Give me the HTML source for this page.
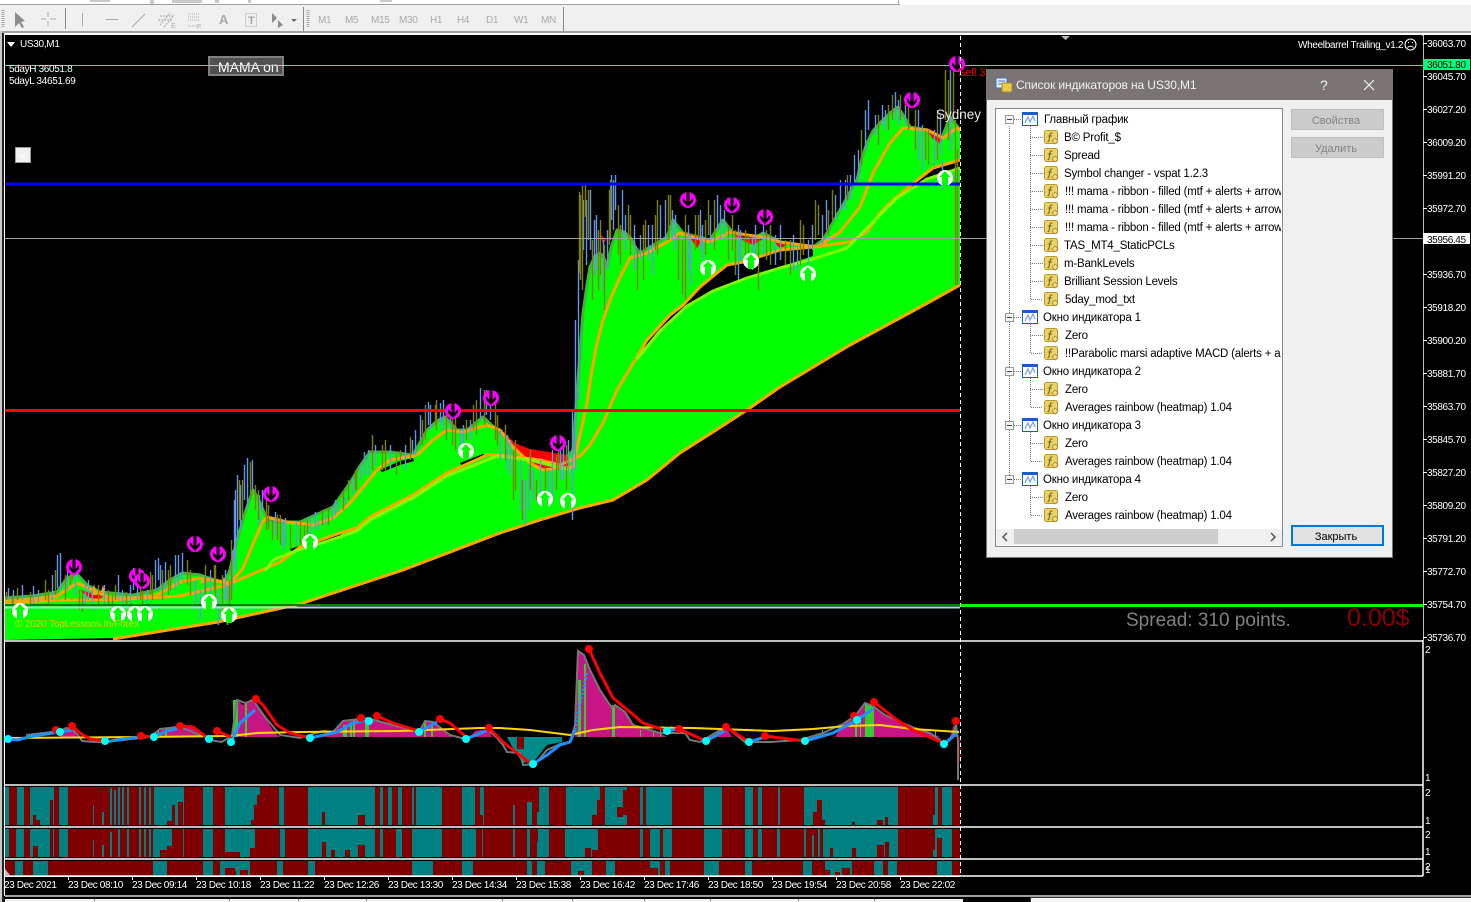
<!DOCTYPE html>
<html><head><meta charset="utf-8"><title>US30,M1</title>
<style>
html,body{margin:0;padding:0;background:#000;width:1471px;height:902px;overflow:hidden}
svg{display:block;font-family:"Liberation Sans","Noto Sans CJK SC",sans-serif}
.ax text{font-size:10px;fill:#fff;letter-spacing:-.38px}
.tb text{font-size:10px;fill:#a8a8a8;letter-spacing:-.3px}
.tr text{font-size:11.5px;fill:#000;letter-spacing:-.2px}
</style></head><body>
<svg width="1471" height="902" viewBox="0 0 1471 902" xmlns="http://www.w3.org/2000/svg">
<defs>
<g id="s"><circle r="8" fill="#f0f"/><path d="M-1.500-8H1.500V2L5-2V1.500L0 7-5 1.500V-2L-1.500 2Z" fill="#000"/></g>
<g id="b"><circle r="8" fill="#fff"/><path d="M0-7-5.500-1H-3V8H3V-1H5.500Z" fill="#0f0"/></g>
<g id="fi"><rect x=".5" y=".5" width="13" height="13" rx="2" fill="#ecd26a" stroke="#b8982c"/><path d="M8.500 3Q6 2.500 6 5L5 10.500Q4.800 12 3.500 11.500M3.800 6H8" fill="none" stroke="#7a6420" stroke-width="1.100"/><path d="M11 8l3 3-3 3-3-3z" fill="#f5dc80" stroke="#a88a28" stroke-width=".8"/></g>
<g id="fo"><rect x=".5" y=".5" width="15" height="13" fill="#fff" stroke="#1a5cc8"/><rect x="0" y="0" width="16" height="3" fill="#1a5cc8"/><path d="M3 11 6 5 8 10 11 4 13 9" fill="none" stroke="#7f9fe0" stroke-width="1.200"/></g>
<g id="ex"><rect x=".5" y=".5" width="8" height="8" fill="#f4f4f4" stroke="#999"/><path d="M2 4.500H7" stroke="#444"/></g>
<clipPath id="tc"><rect x="996" y="109" width="285" height="420"/></clipPath>
<clipPath id="sc"><rect x="5" y="36" width="1418" height="604"/></clipPath>
</defs>

<!-- window chrome -->
<rect width="1471" height="902" fill="#000"/>
<rect width="1471" height="5" fill="#fff"/>
<path d="M0 4.500H900" stroke="#a0a0a0"/><path d="M898.500 0V5" stroke="#a0a0a0"/>
<path d="M90 0h20v2H90zM150 0h4v4h-4zM172 0h30v3h-30zM215 0h4v3h-4zM248 0h3v3h-3zM380 0h12v2h-12z" fill="#c8c8c8"/>
<rect y="5" width="1471" height="26" fill="#f0f0f0"/>
<rect y="31" width="1471" height="2" fill="#a0a0a0"/>
<rect y="33" width="1471" height="2" fill="#fff"/>
<rect x="0" y="31" width="2" height="871" fill="#c8c8c8"/>
<rect x="2" y="33" width="2" height="869" fill="#222"/>
<rect x="4" y="34" width="1" height="862" fill="#fff"/>

<!-- toolbar -->
<g fill="none" stroke="#a8a8a8">
<path d="M3 10V28M308 10V28" stroke-dasharray="1 1" stroke-width="3"/>
<path d="M65.500 8V29M303.500 7V31M563.500 7V31" stroke="#888"/>
<path d="M48 12V17M48 21V26M41 19H46M50 19H56"/>
<path d="M82.500 13V26M106 19.500H118M132 27 145 14"/>
<path d="M160 25 170 13M164 27 174 15M158 20H172M160 16H173" stroke-dasharray="2 1"/>
<path d="M188 14H200M188 17H200M188 20H200M188 26H198" stroke-dasharray="1 1"/>
<rect x="245.500" y="13.500" width="11" height="13" stroke-dasharray="1 1"/>
</g>
<path d="M15 12V27L19 23 22 28 24 27 21 22 25 21Z" fill="#8c8c8c"/>
<path d="M272 13l5 5-5 5zM278 20l5 5-5 3z" fill="#8c8c8c"/>
<path d="M291 19h6l-3 3z" fill="#666"/>
<g class="tb">
<text x="219" y="24" font-size="13" style="font-size:13px;font-weight:bold">A</text>
<text x="248" y="24" style="font-size:11px;font-weight:bold">T</text>
<text x="171" y="28" style="font-size:7px">E</text><text x="197" y="29" style="font-size:7px">F</text>
<text x="318" y="23">M1</text><text x="345" y="23">M5</text><text x="371" y="23">M15</text><text x="399" y="23">M30</text><text x="430" y="23">H1</text><text x="457" y="23">H4</text><text x="486" y="23">D1</text><text x="514" y="23">W1</text><text x="541" y="23">MN</text>
</g>

<!-- panels frames -->
<rect x="5" y="35" width="1418" height="605" fill="#000"/>
<path d="M5 641H1423M5 785H1423M5 827H1423M5 859H1423M5 876H1423M1423 35V876" stroke="#fff" stroke-width="1.500"/>
<path d="M4.500 34V876" stroke="#fff"/>

<!-- Green ribbon -->
<g clip-path="url(#sc)">
<path d="M5 598 33 596 57 592 67 578 77 574 87 585 100 592 133 595 157 590 170 580 182 573 200 575 215 580 225 582 230 570 235 548 240 530 246 510 253 490 258 498 263 510 267 520 280 522 300 522 333 507 350 483 360 466 370 452 390 452 413 455 427 430 437 421 445 417 457 430 467 430 483 417 500 433 515 445 530 458 560 465 573 450 578 380 583 313 587 285 590 267 595 256 600 253 604 258 607 267 611 248 617 230 624 232 630 237 636 248 640 253 667 237 673 220 683 233 710 240 723 220 733 233 747 242 763 233 780 242 813 247 823 240 840 210 857 180 862 158 867 143 873 131 880 123 890 113 898 107 905 118 910 127 927 130 940 143 950 117 960 130 960 285 933 300 900 318 850 345 780 387 747 410 713 432 680 453 647 480 613 500 580 508 540 520 500 533 403 570 300 604 218 622 118 638 5 640Z" fill="#0f0"/>
<path d="M5 598 33 596 57 592 67 578 77 574 87 585 100 592 133 595 157 590 170 580 182 573 200 575 215 580 225 582 230 570 235 548 240 530 246 510 253 490 258 498 263 510 267 520 280 522 300 522 333 507 350 483 360 466 370 452 390 452 413 455 427 430 437 421 445 417 457 430 467 430 483 417 500 433 515 445 530 458 560 465 573 450 578 380 583 313 587 285 590 267 595 256 600 253 604 258 607 267 611 248 617 230 624 232 630 237 636 248 640 253 667 237 673 220 683 233 710 240 723 220 733 233 747 242 763 233 780 242 813 247 823 240 840 210 857 180 862 158 867 143 873 131 880 123 890 113 898 107 905 118 910 127 927 130 940 143 950 117 960 130" fill="none" stroke="#3cb83c" stroke-width="3" stroke-linejoin="round"/>
<rect x="961" y="36" width="462" height="604" fill="#000"/>
<!-- black gaps -->
<path d="M637 357 647 340 670 315 683 305 700 287 717 273 727 265 743 262 780 250 813 247 813 256 780 267 747 277 713 290 687 305 660 330Z" fill="#000"/>
<path d="M850 242 867 232 880 213 893 200 920 178 933 168 960 160 960 167 927 178 897 197 877 217 847 247Z" fill="#000"/>
<path d="M380 470 400 461 413 458 414 461 400 465 382 472Z M290 549 340 532 341 535 292 552Z M460 463 483 454 488 456 462 466Z" fill="#000"/>
<!-- red cloud -->
<path d="M497 426 515 443 530 449 567 455 570 466 545 471 530 463 512 447Z M687 233 703 238 697 248Z M733 235 747 237 765 238 753 245Z M773 241 787 245 780 248Z M927 128 942 135 940 143 932 138Z M80 590 103 596 100 600 88 597Z M600 234 606 240 603 244Z" fill="#f00"/>
<path d="M91 595 94 584 97 595ZM100 595 103 585 106 597ZM200 583 203 577 206 583ZM221 583 224 577 228 585Z" fill="#ffa500"/>
<!-- lines -->
<g fill="none" stroke-linejoin="round">
<path d="M5 601 33 599 57 596 77 583 97 592 110 598 133 598 157 595 180 582 200 578 223 582 230 583 242 570 262 523 267 517 287 522 313 525 333 518 350 503 377 470 390 460 417 455 433 440 447 430 463 432 487 425 500 430 513 447 530 463 543 470 570 467 573 467 580 435 587 403 592 370 597 343 603 320 610 300 620 277 630 258 647 253 667 242 680 233 693 237 710 242 730 232 747 235 763 237 780 242 817 247 840 232 860 207 873 173 890 143 903 128 927 130 943 138 957 128 960 130" stroke="#ffa500" stroke-width="3"/>
<path d="M5 603 60 600 110 600 180 596 227 585 257 572 280 562 300 547 340 533 357 528 370 517 413 495 447 473 487 455 500 455 540 460 560 465 580 456 590 445 603 423 617 390 637 357 647 340 670 315 683 305 700 287 717 273 727 265 743 262 780 250 813 247 850 242 867 232 880 213 893 200 920 178 933 168 960 160" stroke="#ffa500" stroke-width="3"/>
<path d="M265 571 273 560 290 553 340 537 357 531 370 520 413 498 447 476 487 460 497 456 530 460 570 470 M637 359 660 331 687 306 713 291 747 278 780 268 813 259 847 248 877 218 897 198 927 179 960 168" stroke="#7fff00" stroke-width="3"/>
<path d="M113 639 218 622 300 604 403 570 500 533 540 520 580 508 613 500 647 480 680 453 713 432 747 410 780 387 850 345 900 318 933 300 960 285" stroke="#ffa500" stroke-width="3"/>
</g>
<!-- bars -->
<g transform="translate(.5 0)" fill="none" stroke-width="1.400">
<path stroke="#6495ed" d="M8 588V600M13 590V603M22 585V600M38 590V602M52 575V600M60 553V590M67 570V590M75 575V595M85 585V605M92 590V610M104 585V607M118 575V600M122 590V610M130 585V605M137 570V600M147 590V610M155 560V590M158 558V580M165 562V590M175 555V590M182 553V580M195 580V610M200 590V620M210 570V600M218 590V625M225 570V600M232 550V590M235 490V570M237 475V540M240 485V530M247 458V510M252 460V490M262 490V510M275 512V535M285 518V545M296 522V545M310 517V540M318 520V530M325 515V525M332 508V520M338 502V512M345 497V505M352 478V495M360 465V480M368 450V475M375 445V465M390 445V470M405 445V470M412 440V455M420 415V440M430 405V430M440 403V425M450 405V430M460 430V455M470 420V440M480 388V420M490 395V420M500 430V460M510 440V475M520 460V510M525 480V525M533 470V500M540 460V495M552 450V500M560 450V480M568 440V475M572 410V520M575 320V470M578 260V400M586 200V265M590 190V250M596 215V270M607 230V270M613 180V230M615 175V210M625 215V250M640 235V260M652 225V275M665 200V240M672 210V240M690 235V285M700 210V250M710 215V245M717 195V230M724 210V235M740 230V260M752 235V270M763 225V255M780 225V260M797 245V270M808 240V265M822 215V245M835 195V220M845 180V210M850 175V200M858 150V180M865 110V150M875 115V135M885 110V130M895 92V120M905 105V125M922 125V170M934 130V165M942 160V190M950 70V150M33 586V604M57 555V588M88 580V600M133 568V590M160 565V590M178 555V585M204 575V605M227 585V625M234 500V560M244 465V500M259 495V525M283 520V550M315 512V530M335 500V515M364 452V475M415 430V455M428 402V425M443 400V430M463 425V450M486 390V415M507 435V470M528 465V510M548 470V500M563 440V480M583 200V250M594 220V275M603 240V290M611 175V220M622 190V240M634 225V270M648 225V260M660 205V240M675 215V250M688 225V270M702 225V260M720 205V240M738 225V280M755 225V255M775 235V265M793 235V270M812 225V250M826 200V230M840 180V210M854 155V185M868 100V130M882 105V125M898 100V125M918 110V160M940 115V155"/>
<path stroke="#808000" d="M12 595V606M30 592V608M48 590V605M55 570V595M65 575V600M72 560V580M82 590V612M98 585V608M112 595V610M126 592V606M142 590V612M150 572V595M162 570V600M170 565V590M187 560V585M205 565V600M215 565V605M222 575V610M229 580V620M242 480V520M250 462V500M258 490V520M266 495V530M272 520V540M280 515V545M290 525V548M304 525V548M322 510V525M343 490V510M356 470V490M372 435V470M382 445V470M396 455V475M410 437V460M425 405V440M436 400V430M446 410V440M455 405V450M466 420V440M476 400V435M484 390V425M495 400V440M505 425V460M515 440V490M522 480V520M530 450V490M545 465V490M558 440V470M566 445V490M579 192V273M582 185V290M585 185V217M592 240V300M600 220V275M604 245V310M610 180V240M620 225V265M630 215V255M637 250V290M645 220V250M657 200V255M668 195V240M678 235V280M685 215V300M695 215V250M705 220V255M714 200V250M728 225V260M735 230V275M745 230V265M758 240V290M770 225V265M790 240V275M800 220V265M815 200V240M828 210V235M888 105V130M900 95V120M915 110V150M925 130V160M937 110V160M948 80V140M953 62V120M955 120V285M957 150V285M6 592V600M17 588V600M45 580V600M70 565V585M79 590V610M108 590V606M115 585V600M140 585V600M152 575V600M168 570V595M190 570V595M214 565V590M222 590V615M231 540V600M239 480V520M255 485V510M268 505V530M277 515V540M300 520V545M307 520V540M328 508V525M348 480V500M355 470V490M385 440V470M400 450V465M422 420V445M435 405V425M452 415V445M473 405V430M497 415V445M513 450V500M536 480V500M556 455V490M580 195V280M588 190V240M598 230V290M609 190V245M618 205V255M628 205V240M643 225V280M655 215V250M670 195V225M682 240V295M698 215V240M708 200V235M732 215V250M748 235V260M766 230V260M785 240V265M803 225V255M818 205V235M832 190V220M847 175V200M861 130V165M878 115V145M892 95V120M908 105V130M928 130V165M945 70V120"/>
</g>
<!-- horizontal levels -->
<path d="M5 65.500H1423" stroke="#55dd99"/>
<path d="M5 238.500H1423" stroke="#a0a0a0"/>
<path d="M5 184H960" stroke="#00f" stroke-width="3"/>
<path d="M5 410.500H960" stroke="#f00" stroke-width="3"/>
<path d="M5 605H960" stroke="#008000" stroke-width="2"/>
<path d="M5 607.500H960" stroke="#add8e6" stroke-width="2"/>
<path d="M960 605.500H1423" stroke="#0f0" stroke-width="3"/>
<!-- arrows -->
<use href="#s" x="74" y="567"/><use href="#s" x="137" y="576"/><use href="#s" x="142" y="581"/><use href="#s" x="195" y="544"/><use href="#s" x="218" y="554"/><use href="#s" x="271" y="494"/><use href="#s" x="453" y="411"/><use href="#s" x="491" y="398"/><use href="#s" x="558" y="443"/><use href="#s" x="688" y="200"/><use href="#s" x="732" y="205"/><use href="#s" x="765" y="217"/><use href="#s" x="912" y="100"/><use href="#s" x="957" y="64"/>
<use href="#b" x="20" y="611"/><use href="#b" x="118" y="614"/><use href="#b" x="135" y="614"/><use href="#b" x="145" y="614"/><use href="#b" x="209" y="602"/><use href="#b" x="229" y="615"/><use href="#b" x="310" y="542"/><use href="#b" x="466" y="451"/><use href="#b" x="545" y="499"/><use href="#b" x="568" y="501"/><use href="#b" x="708" y="268"/><use href="#b" x="751" y="261"/><use href="#b" x="808" y="274"/><use href="#b" x="945" y="178"/>
</g>

<!-- main chart labels -->
<path d="M7 42h8l-4 5z" fill="#fff"/>
<text x="20" y="47" fill="#fff" font-size="10" letter-spacing="-.3">US30,M1</text>
<text x="9" y="72" fill="#fff" font-size="10" letter-spacing="-.35">5dayH 36051.8</text>
<text x="9" y="84" fill="#fff" font-size="10" letter-spacing="-.35">5dayL 34651.69</text>
<rect x="209" y="57" width="74" height="18" fill="#505050" stroke="#808080" stroke-width="2"/>
<text x="218" y="72" fill="#fff" font-size="14">MAMA on</text>
<path d="M209 65.500H284" stroke="#c8c8c8"/>
<rect x="15.500" y="147.500" width="15" height="15" fill="#f0f0f0" stroke="#999"/>
<text x="20" y="159" fill="#fff" font-size="10">v</text>
<text x="15" y="627" fill="#d4d400" font-size="10" letter-spacing="-.15">© 2020 TopLessons.In/Forex</text>
<text x="936" y="119" fill="#e8e8e8" font-size="13.500">Sydney</text>
<text x="958" y="76" fill="#f00" font-size="11">Sell 3</text>
<text x="1298" y="48" fill="#fff" font-size="10" letter-spacing="-.33">Wheelbarrel Trailing_v1.2</text>
<g fill="none" stroke="#fff"><circle cx="1410.500" cy="44.500" r="5.500"/><path d="M1407.500 47.500Q1410.500 45 1413.500 47.500"/></g>
<path d="M1408 42.500h1M1412 42.500h1" stroke="#fff"/>
<path d="M1061 36h9l-4.500 4z" fill="#bbb"/>
<text x="1126" y="626" fill="#808080" font-size="19">Spread: 310 points.</text>
<text x="1347" y="626" fill="#8b0000" font-size="25">0.00$</text>

<!-- indicator panel -->
<g>
<path d="M60 737 64 731 72 729 78 737ZM155 737 162 728 175 726 195 727 205 737ZM233 737 237 700 243 705 247 702 253 700 265 718 275 733 280 737ZM323 737 333 732 343 720 367 718 400 727 420 730 425 721 433 722 450 735 455 737ZM470 737 475 731 488 729 492 737ZM575 737 578 651 584 655 590 670 600 690 612 708 615 705 625 712 633 725 640 727 660 733 667 737ZM715 737 720 729 726 727 732 737ZM835 737 843 724 855 716 865 703 873 706 885 715 900 722 915 728 930 733 940 737ZM950 737 954 724 958 737Z" fill="#c71585"/>
<path d="M507 737H562V742L547 745 535 760 523 763 515 752Z" fill="#008b8b"/>
<path d="M517 737h7v12h-7zM958 737h3v25h-3z" fill="#800000"/>
<path d="M233 700h5v37h-5zM245 703h2v34h-2zM578 680h3v57h-3zM584 664h2v73h-2zM612 705h3v32h-3zM157 730h2v7h-2zM165 728h2v9h-2zM343 725h4v12h-4zM350 722h2v15h-2zM353 720h2v17h-2zM365 720h4v17h-4zM424 722h2v15h-2zM431 723h2v14h-2zM855 718h2v19h-2zM860 715h1v22h-1zM865 704h9v33h-9zM873 710h1v27h-1zM822 730h1v7h-1zM935 730h1v7h-1zM640 730h1v7h-1zM653 730h1v7h-1zM660 730h1v7h-1z" fill="#32cd32"/>
<path d="M26 735 60 731 66 728 72 729 78 735 82 741 95 742 105 742 141 738 150 737 160 729 180 727 205 737 215 741 222 742 228 738 232 735 237 700 240 701 245 703 253 700 265 717 280 735 300 738 323 731 333 732 343 721 367 718 400 727 420 730 425 721 433 722 450 735 465 739 488 730 497 738 503 745 507 752 520 753 523 765 535 764 547 750 560 744 570 742 575 725 578 651 584 655 590 670 600 690 612 708 615 705 625 712 633 725 640 727 660 733 685 733 690 740 700 742 715 733 726 727 745 742 770 742 800 740 823 733 843 724 855 716 865 703 873 706 885 715 900 722 915 728 930 733 940 740 944 745 952 738 956 725 958 740 958 780" fill="none" stroke="#777" stroke-width="2"/>
<path d="M5 738 141 737 230 736 257 733 300 732 400 731 480 728 500 728 530 730 570 735 593 730 620 727 693 728 773 731 813 729 847 726 880 725 913 729 959 732" fill="none" stroke="#ffd700" stroke-width="2"/>
<g fill="none" stroke="#1e90ff" stroke-width="3" stroke-linejoin="round">
<path d="M8 739 17 740 33 736 60 732 72 730M105 742 123 739 141 737M154 737 167 731 180 728M231 742 240 723 255 710M310 738 337 732 353 723 367 720M419 732 437 722M466 739 488 730M533 764 547 755 560 745 570 742 575 730"/>
<path d="M575 730 580 703 587 673" stroke-dasharray="2 2"/>
<path d="M667 731 679 729M706 741 726 730M749 742 765 737M805 741 833 733 857 720 873 709M944 744 957 733"/>
</g>
<g fill="none" stroke="#f00" stroke-width="3" stroke-linejoin="round">
<path d="M72 726 80 733 90 739 105 741M141 736 153 737M180 726 193 727 209 739M217 731 231 737M256 699 263 705 277 725 290 733 310 738M377 716 393 723 419 731M440 719 450 723 466 737M489 728 503 742 530 763M589 649 600 673 613 698 630 712 643 723 667 731M679 729 706 741M726 727 749 742M765 736 805 741M874 702 897 720 913 730 943 743"/>
</g>
<g fill="#f00"><circle cx="56" cy="730" r="4"/><circle cx="72" cy="726" r="4"/><circle cx="141" cy="736" r="4"/><circle cx="180" cy="726" r="4"/><circle cx="217" cy="731" r="4"/><circle cx="256" cy="699" r="4"/><circle cx="361" cy="718" r="4"/><circle cx="377" cy="716" r="4"/><circle cx="440" cy="719" r="4"/><circle cx="489" cy="728" r="4"/><circle cx="589" cy="649" r="4"/><circle cx="679" cy="729" r="4"/><circle cx="726" cy="727" r="4"/><circle cx="765" cy="736" r="4"/><circle cx="854" cy="716" r="4"/><circle cx="874" cy="702" r="4"/><circle cx="956" cy="721" r="4"/></g>
<g fill="#0ff"><circle cx="8" cy="739" r="4"/><circle cx="60" cy="732" r="4"/><circle cx="105" cy="741" r="4"/><circle cx="154" cy="737" r="4"/><circle cx="209" cy="739" r="4"/><circle cx="231" cy="742" r="4"/><circle cx="310" cy="738" r="4"/><circle cx="369" cy="721" r="4"/><circle cx="419" cy="732" r="4"/><circle cx="466" cy="739" r="4"/><circle cx="533" cy="764" r="4"/><circle cx="667" cy="731" r="4"/><circle cx="706" cy="741" r="4"/><circle cx="749" cy="742" r="4"/><circle cx="805" cy="741" r="4"/><circle cx="857" cy="720" r="4"/><circle cx="944" cy="744" r="4"/></g>
</g>

<!-- heatmaps -->
<rect x="5" y="787" width="955" height="38" fill="#008080"/>
<rect x="5" y="829" width="955" height="28" fill="#008080"/>
<rect x="5" y="861" width="955" height="14" fill="#800000"/>
<path fill="none" stroke="#800000" stroke-width="38" d="M9 806H17M24 806H30M54 806H59M68 806H154M184 806H203M213 806H225M260 806H279M284 806H308M375 806H380M383 806H388M392 806H398M402 806H412M414 806H416M442 806H462M475 806H483M484 806H539M549 806H566M600 806H605M627 806H640M643 806H646M672 806H704M722 806H745M753 806H758M762 806H778M780 806H804M898 806H935M938 806H942M952 806H960"/>
<path fill="#800000" d="M50 800h3v25h-3zM33 815h3v10h-3zM36 820h4v5h-4zM167 821h5v4h-5zM172 805h3v20h-3zM178 802h5v23h-5zM251 820h3v5h-3zM254 805h3v20h-3zM257 795h3v30h-3zM322 812h3v13h-3zM358 815h7v10h-7zM592 815h8v10h-8zM597 800h3v25h-3zM617 807h6v10h-6zM623 800h4v15h-4zM623 790h4v15h-4zM813 812h4v13h-4zM817 800h5v25h-5zM822 820h3v5h-3zM852 822h3v3h-3zM877 820h6v5h-6zM885 817h3v8h-3z"/>
<path fill="#008080" d="M93 805h1v20h-1zM102 812h2v13h-2zM110 788h2v37h-2zM114 790h2v35h-2zM118 787h2v38h-2zM122 787h2v38h-2zM127 787h2v38h-2zM139 787h2v38h-2zM144 787h2v38h-2zM149 787h2v38h-2zM480 787h3v28h-3zM513 805h2v20h-2zM527 802h5v23h-5zM537 812h2v13h-2zM566 787h4v38h-4zM933 815h4v10h-4z"/>
<path fill="none" stroke="#800000" stroke-width="28" d="M9 843H16M24 843H30M50 843H53M54 843H59M68 843H153M172 843H183M184 843H203M213 843H225M255 843H280M285 843H308M375 843H380M383 843H396M402 843H412M442 843H462M476 843H482M483 843H538M549 843H565M598 843H640M643 843H650M660 843H663M672 843H704M722 843H745M753 843H758M762 843H777M780 843H804M806 843H823M898 843H935M952 843H960"/>
<path fill="#800000" d="M33 846h5v11h-5zM167 846h5v11h-5zM160 850h7v7h-7zM225 852h15v5h-15zM250 848h5v9h-5zM322 842h4v15h-4zM331 850h4v7h-4zM345 850h5v7h-5zM358 845h7v12h-7zM592 850h6v7h-6zM585 848h6v9h-6zM877 845h7v12h-7zM885 842h4v15h-4zM852 848h4v9h-4zM830 848h3v9h-3zM937 838h5v19h-5z"/>
<path fill="#008080" d="M93 840h1v17h-1zM102 845h2v12h-2zM110 832h2v25h-2zM118 829h2v28h-2zM127 829h2v28h-2zM139 829h2v28h-2zM144 829h2v28h-2zM149 829h2v28h-2zM513 829h2v28h-2zM527 829h3v28h-3zM537 842h2v15h-2zM566 829h4v28h-4zM640 829h2v28h-2zM651 845h2v12h-2zM670 848h2v9h-2zM812 835h2v22h-2zM818 829h2v28h-2zM933 850h2v7h-2z"/>
<path fill="none" stroke="#008080" stroke-width="14" d="M15 868H23M33 868H48M153 868H167M203 868H213M220 868H250M277 868H283M308 868H315M412 868H433M462 868H473M527 868H532M537 868H545M571 868H592M606 868H615M650 868H660M665 868H670M704 868H719M745 868H752M803 868H812M825 868H852M874 868H883M888 868H897M937 868H952"/>
<path fill="#800000" d="M225 868h10v7h-10zM240 870h8v5h-8zM578 871h6v4h-6zM650 868h8v7h-8zM825 870h5v5h-5zM835 872h5v3h-5zM842 868h8v7h-8zM230 871h6v4h-6z"/>
<path d="M5 869 10 875H5Z" fill="#bbb"/>

<!-- dashed cursor -->
<path d="M960.500 36V876" stroke="#fff" stroke-dasharray="4 3"/>

<!-- right axis -->
<rect x="1424" y="35" width="47" height="861" fill="#000"/>
<path d="M1423 43.500h4M1423 76.500h4M1423 109.500h4M1423 142.500h4M1423 175.500h4M1423 208.500h4M1423 274.500h4M1423 307.500h4M1423 340.500h4M1423 373.500h4M1423 406.500h4M1423 439.500h4M1423 472.500h4M1423 505.500h4M1423 538.500h4M1423 571.500h4M1423 604.500h4M1423 637.500h4" stroke="#fff"/>
<g class="ax">
<text x="1427" y="47">36063.70</text><text x="1427" y="80">36045.70</text><text x="1427" y="113">36027.20</text><text x="1427" y="146">36009.20</text><text x="1427" y="179">35991.20</text><text x="1427" y="212">35972.70</text><text x="1427" y="278">35936.70</text><text x="1427" y="311">35918.20</text><text x="1427" y="344">35900.20</text><text x="1427" y="377">35881.70</text><text x="1427" y="410">35863.70</text><text x="1427" y="443">35845.70</text><text x="1427" y="476">35827.20</text><text x="1427" y="509">35809.20</text><text x="1427" y="542">35791.20</text><text x="1427" y="575">35772.70</text><text x="1427" y="608">35754.70</text><text x="1427" y="641">35736.70</text>
<text x="1425" y="653">2</text><text x="1425" y="781">1</text><text x="1425" y="796">2</text><text x="1425" y="824">1</text><text x="1425" y="838">2</text><text x="1425" y="855">1</text><text x="1425" y="870">2</text><text x="1425" y="873">1</text>
</g>
<rect x="1423" y="59" width="47" height="11" fill="#00ff7f"/>
<text x="1427" y="68" font-size="10" letter-spacing="-.38" fill="#000">36051.80</text>
<rect x="1423" y="233" width="47" height="11" fill="#fff"/>
<text x="1427" y="243" font-size="10" letter-spacing="-.38" fill="#000">35956.45</text>

<!-- time axis -->
<path d="M5 876.500H960M4.500 876V880M68.500 876V880M132.500 876V880M196.500 876V880M260.500 876V880M324.500 876V880M388.500 876V880M452.500 876V880M516.500 876V880M580.500 876V880M644.500 876V880M708.500 876V880M772.500 876V880M836.500 876V880M900.500 876V880" stroke="#fff"/>
<g class="ax">
<text x="4" y="888">23 Dec 2021</text><text x="68" y="888">23 Dec 08:10</text><text x="132" y="888">23 Dec 09:14</text><text x="196" y="888">23 Dec 10:18</text><text x="260" y="888">23 Dec 11:22</text><text x="324" y="888">23 Dec 12:26</text><text x="388" y="888">23 Dec 13:30</text><text x="452" y="888">23 Dec 14:34</text><text x="516" y="888">23 Dec 15:38</text><text x="580" y="888">23 Dec 16:42</text><text x="644" y="888">23 Dec 17:46</text><text x="708" y="888">23 Dec 18:50</text><text x="772" y="888">23 Dec 19:54</text><text x="836" y="888">23 Dec 20:58</text><text x="900" y="888">23 Dec 22:02</text>
</g>
<rect x="5" y="895" width="1466" height="2" fill="#a0a0a0"/>
<rect x="5" y="897" width="958" height="5" fill="#000"/>
<rect x="5" y="899" width="958" height="3" fill="#f4f4f4"/>
<rect x="1030" y="897" width="441" height="5" fill="#f4f4f4"/>
<path d="M1030 897.500H1471M1030.500 897V902" stroke="#333"/>
<path d="M94.500 899v2M229.500 899v2M298.500 899v2M366.500 899v2M502.500 899v2M572.500 899v2M644.500 899v2M710.500 899v2M798.500 899v2M874.500 899v2" stroke="#777"/>

<!-- dialog -->
<rect x="986.500" y="69.500" width="406" height="488" fill="#f0f0f0" stroke="#7a7473"/>
<rect x="987" y="70" width="405" height="30" fill="#7a7473"/>
<rect x="996" y="78" width="11" height="10" fill="#e8f0fa" stroke="#3a70c0"/>
<path d="M998 81h7M998 84h7" stroke="#3a70c0"/>
<rect x="1002" y="83" width="10" height="9" rx="1" fill="#ecc94a" stroke="#a88a20"/>
<text x="1016" y="89" fill="#f2f2f2" font-size="12" letter-spacing="-.12">Список индикаторов на US30,M1</text>
<text x="1320" y="90" fill="#f2f2f2" font-size="14">?</text>
<path d="M1364 80 1374 90M1374 80 1364 90" stroke="#f2f2f2" stroke-width="1.200"/>

<rect x="995.500" y="108.500" width="287" height="438" fill="#fff" stroke="#828790"/>
<g fill="none" stroke="#777" stroke-dasharray="1 1">
<path d="M1009.500 126V476M1014 119.500H1022M1014 317.500H1022M1014 371.500H1022M1014 425.500H1022M1014 479.500H1022"/>
<path d="M1030.500 126V299.500H1043M1030 137.500H1043M1030 155.500H1043M1030 173.500H1043M1030 191.500H1043M1030 209.500H1043M1030 227.500H1043M1030 245.500H1043M1030 263.500H1043M1030 281.500H1043"/>
<path d="M1030.500 324V353.500H1043M1030 335.500H1043M1030.500 378V407.500H1043M1030 389.500H1043M1030.500 432V461.500H1043M1030 443.500H1043M1030.500 486V515.500H1043M1030 497.500H1043"/>
</g>
<use href="#ex" x="1005" y="115"/><use href="#ex" x="1005" y="313"/><use href="#ex" x="1005" y="367"/><use href="#ex" x="1005" y="421"/><use href="#ex" x="1005" y="475"/>
<use href="#fo" x="1022" y="112"/><use href="#fo" x="1022" y="310"/><use href="#fo" x="1022" y="364"/><use href="#fo" x="1022" y="418"/><use href="#fo" x="1022" y="472"/>
<use href="#fi" x="1044" y="130"/><use href="#fi" x="1044" y="148"/><use href="#fi" x="1044" y="166"/><use href="#fi" x="1044" y="184"/><use href="#fi" x="1044" y="202"/><use href="#fi" x="1044" y="220"/><use href="#fi" x="1044" y="238"/><use href="#fi" x="1044" y="256"/><use href="#fi" x="1044" y="274"/><use href="#fi" x="1044" y="292"/><use href="#fi" x="1044" y="328"/><use href="#fi" x="1044" y="346"/><use href="#fi" x="1044" y="382"/><use href="#fi" x="1044" y="400"/><use href="#fi" x="1044" y="436"/><use href="#fi" x="1044" y="454"/><use href="#fi" x="1044" y="490"/><use href="#fi" x="1044" y="508"/>
<g class="tr" clip-path="url(#tc)">
<text x="1044" y="123">Главный график</text>
<text x="1064" y="141">B© Profit_$</text>
<text x="1064" y="159">Spread</text>
<text x="1064" y="177">Symbol changer - vspat 1.2.3</text>
<text x="1065" y="195">!!! mama - ribbon - filled (mtf + alerts + arrows)</text>
<text x="1065" y="213">!!! mama - ribbon - filled (mtf + alerts + arrows)</text>
<text x="1065" y="231">!!! mama - ribbon - filled (mtf + alerts + arrows)</text>
<text x="1064" y="249">TAS_MT4_StaticPCLs</text>
<text x="1064" y="267">m-BankLevels</text>
<text x="1064" y="285">Brilliant Session Levels</text>
<text x="1065" y="303">5day_mod_txt</text>
<text x="1043" y="321">Окно индикатора 1</text>
<text x="1065" y="339">Zero</text>
<text x="1065" y="357">!!Parabolic marsi adaptive MACD (alerts + arrows)</text>
<text x="1043" y="375">Окно индикатора 2</text>
<text x="1065" y="393">Zero</text>
<text x="1065" y="411">Averages rainbow (heatmap) 1.04</text>
<text x="1043" y="429">Окно индикатора 3</text>
<text x="1065" y="447">Zero</text>
<text x="1065" y="465">Averages rainbow (heatmap) 1.04</text>
<text x="1043" y="483">Окно индикатора 4</text>
<text x="1065" y="501">Zero</text>
<text x="1065" y="519">Averages rainbow (heatmap) 1.04</text>
</g>
<rect x="996" y="529" width="286" height="16" fill="#f0f0f0"/>
<rect x="1014" y="529" width="204" height="15" fill="#cdcdcd"/>
<path d="M1007 533 1003 537 1007 541M1271 533 1275 537 1271 541" fill="none" stroke="#555" stroke-width="1.500"/>

<rect x="1291.500" y="109.500" width="92" height="20" fill="#ccc" stroke="#bfbfbf"/>
<text x="1336" y="124" text-anchor="middle" fill="#838383" font-size="11">Свойства</text>
<rect x="1291.500" y="137.500" width="92" height="20" fill="#ccc" stroke="#bfbfbf"/>
<text x="1336" y="152" text-anchor="middle" fill="#838383" font-size="11">Удалить</text>
<rect x="1292" y="526" width="91" height="19" fill="#e1e1e1" stroke="#0078d7" stroke-width="2"/>
<text x="1336" y="540" text-anchor="middle" fill="#000" font-size="11">Закрыть</text>
</svg>
</body></html>
